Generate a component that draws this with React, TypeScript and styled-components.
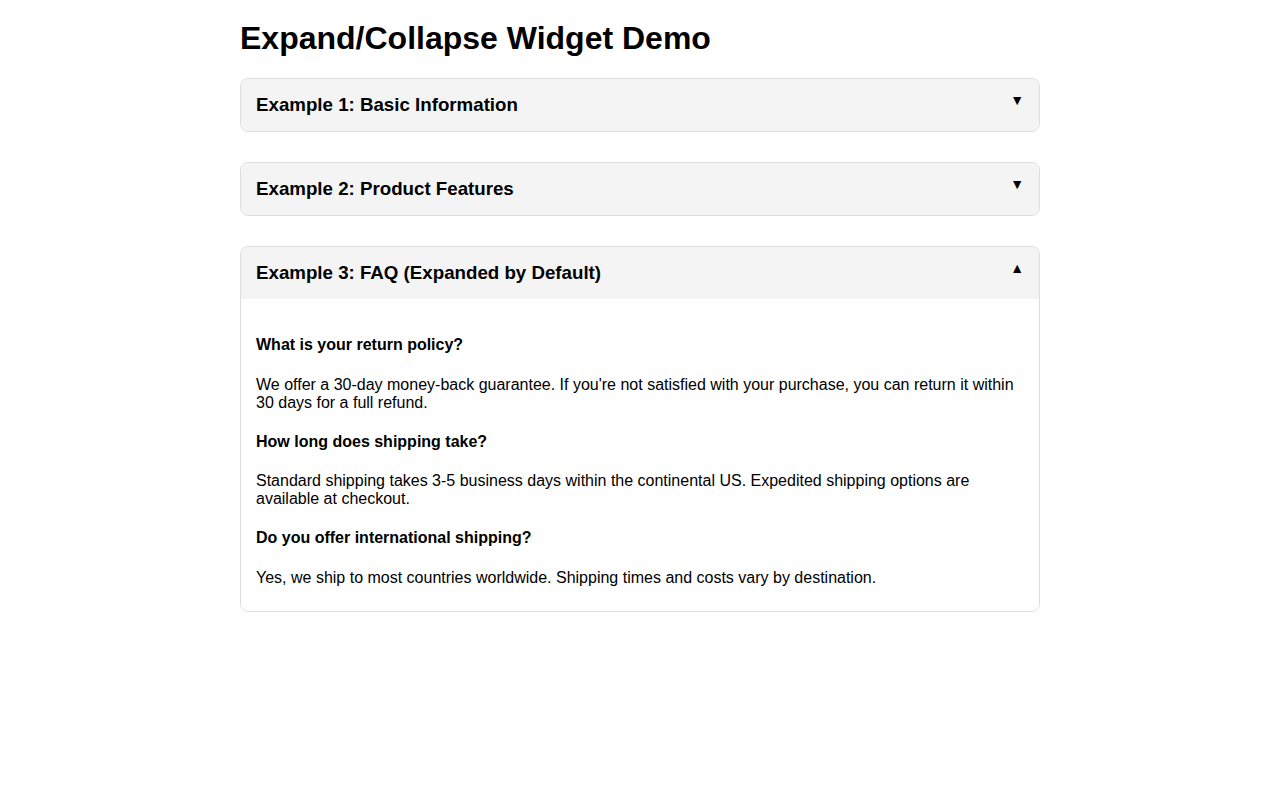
import React, { useState } from "react";
import styled, { createGlobalStyle } from "styled-components";

const GlobalStyle = createGlobalStyle`
  html, body {
    margin: 0;
    padding: 0;
    background: #fff;
  }
  body {
    font-family: "Liberation Sans", Arial, sans-serif;
    color: #000;
  }
`;

const Page = styled.main`
  max-width: 800px;
  margin: 0 auto;
  padding: 20px;
`;

const Title = styled.h1`
  font-size: 32px;
  font-weight: bold;
  margin: 0 0 21px;
`;

const Widget = styled.div`
  border: 1px solid #ddd;
  border-radius: 8px;
  margin-bottom: 30px;
  overflow: hidden;
`;

const Header = styled.div`
  position: relative;
  background: #f4f4f4;
  padding: 15px;
  cursor: pointer;
  user-select: none;
`;

const HeaderTitle = styled.h3`
  margin: 0;
  font-size: 18.72px;
  font-weight: bold;
`;

const Arrow = styled.span`
  position: absolute;
  right: 15px;
  top: 13px;
  font-size: 14px;
`;

const Content = styled.div`
  padding: 16px 15px 14px;
  background: #fff;
`;

const Question = styled.h4`
  font-size: 16px;
  font-weight: bold;
  margin: 21px 0 21.5px;
`;

const Answer = styled.p`
  font-size: 16px;
  margin: 10px 0;
`;

type Faq = { q: string; a: string };

type Section = {
  title: string;
  open: boolean;
  text?: string;
  faq?: Faq[];
};

const sections: Section[] = [
  {
    title: "Example 1: Basic Information",
    open: false,
    text: "This is a basic expand/collapse widget. Click the header to toggle the content.",
  },
  {
    title: "Example 2: Product Features",
    open: false,
    text: "Fast, reliable and easy to use. Works on every device.",
  },
  {
    title: "Example 3: FAQ (Expanded by Default)",
    open: true,
    faq: [
      {
        q: "What is your return policy?",
        a: "We offer a 30-day money-back guarantee. If you're not satisfied with your purchase, you can return it within 30 days for a full refund.",
      },
      {
        q: "How long does shipping take?",
        a: "Standard shipping takes 3-5 business days within the continental US. Expedited shipping options are available at checkout.",
      },
      {
        q: "Do you offer international shipping?",
        a: "Yes, we ship to most countries worldwide. Shipping times and costs vary by destination.",
      },
    ],
  },
];

function Collapsible({ title, open, text, faq }: Section) {
  const [isOpen, setIsOpen] = useState(open);
  return (
    <Widget>
      <Header onClick={() => setIsOpen(!isOpen)}>
        <HeaderTitle>{title}</HeaderTitle>
        <Arrow>{isOpen ? "▲" : "▼"}</Arrow>
      </Header>
      {isOpen && (
        <Content>
          {text && <Answer>{text}</Answer>}
          {faq &&
            faq.map((item) => (
              <React.Fragment key={item.q}>
                <Question>{item.q}</Question>
                <Answer>{item.a}</Answer>
              </React.Fragment>
            ))}
        </Content>
      )}
    </Widget>
  );
}

export default function App() {
  return (
    <>
      <GlobalStyle />
      <Page>
        <Title>Expand/Collapse Widget Demo</Title>
        {sections.map((s) => (
          <Collapsible key={s.title} {...s} />
        ))}
      </Page>
    </>
  );
}
